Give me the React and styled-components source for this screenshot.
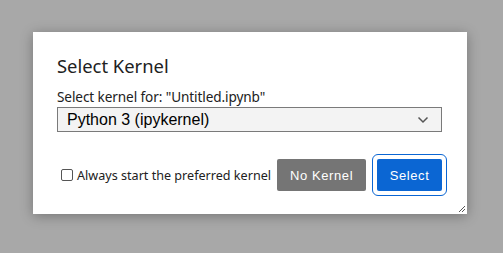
import React from 'react';
import styled, { createGlobalStyle } from 'styled-components';

const GlobalStyle = createGlobalStyle`
  html, body {
    margin: 0;
    padding: 0;
    width: 503px;
    height: 253px;
    overflow: hidden;
    background: #a8a8a8;
  }
`;

const Backdrop = styled.div`
  width: 503px;
  height: 253px;
  padding: 32px 36px 39px 33px;
  box-sizing: border-box;
`;

const Dialog = styled.div`
  position: relative;
  height: 100%;
  background: #ffffff;
  box-shadow: 0 2px 12px rgba(0, 0, 0, 0.3);
  padding: 22px 24px 0 24px;
  box-sizing: border-box;
  font-family: 'Noto Sans', 'Open Sans', sans-serif;
  color: #212121;
`;

const Title = styled.h2`
  margin: 0 0 10px;
  font-size: 18.4px;
  font-weight: 400;
  line-height: 24px;
  color: #212121;
`;

const Label = styled.div`
  font-size: 13.6px;
  line-height: 17px;
  margin-bottom: 2px;
  letter-spacing: -0.1px;
`;

const SelectBox = styled.div`
  display: flex;
  align-items: center;
  justify-content: space-between;
  width: 385px;
  height: 25px;
  box-sizing: border-box;
  border: 1px solid #7a7a7a;
  background: #f3f3f3;
  padding: 0 12px 0 9px;
  font-family: 'Liberation Sans', Arial, sans-serif;
  font-size: 16px;
  color: #000;
`;

const Footer = styled.div`
  display: flex;
  align-items: center;
  margin-top: 22px;
`;

const CheckLabel = styled.label`
  display: flex;
  align-items: center;
  gap: 4px;
  font-size: 12.6px;
  color: #212121;
  margin-left: 4px;
  white-space: nowrap;
  flex-shrink: 0;
`;

const Check = styled.span`
  width: 12px;
  height: 12px;
  border: 1px solid #555;
  border-radius: 2px;
  box-sizing: border-box;
  background: #fff;
`;

const Button = styled.button`
  flex-shrink: 0;
  font-family: 'Liberation Sans', Arial, sans-serif;
  font-size: 13px;
  letter-spacing: 0.6px;
  color: #fff;
  border: none;
  border-radius: 2px;
  height: 32px;
  padding: 0 12px;
  white-space: nowrap;
  background: ${(p) => (p.primary ? '#0b66d3' : '#757575')};
  cursor: pointer;
`;

const FocusRing = styled.div`
  flex-shrink: 0;
  margin-left: 6px;
  padding: 4px;
  border: 1px solid #0b66d3;
  border-radius: 6px;
  display: flex;
`;

const Grip = styled.svg`
  position: absolute;
  right: 1px;
  bottom: 1px;
`;

export default function App() {
  return (
    <>
      <GlobalStyle />
      <Backdrop>
        <Dialog>
          <Title>Select Kernel</Title>
          <Label>Select kernel for: "Untitled.ipynb"</Label>
          <SelectBox>
            <span>Python 3 (ipykernel)</span>
            <svg width="12" height="8" viewBox="0 0 12 8">
              <path d="M1.5 1.5 L6 6 L10.5 1.5" fill="none" stroke="#555" strokeWidth="1.5" />
            </svg>
          </SelectBox>
          <Footer>
            <CheckLabel>
              <Check />
              Always start the preferred kernel
            </CheckLabel>
            <Button style={{ marginLeft: 6, width: 89 }}>No Kernel</Button>
            <FocusRing>
              <Button primary style={{ width: 65 }}>Select</Button>
            </FocusRing>
          </Footer>
          <Grip width="9" height="9" viewBox="0 0 9 9">
            <path d="M8 2 L2 8 M8 5 L5 8" stroke="#555" strokeWidth="1" />
          </Grip>
        </Dialog>
      </Backdrop>
    </>
  );
}
